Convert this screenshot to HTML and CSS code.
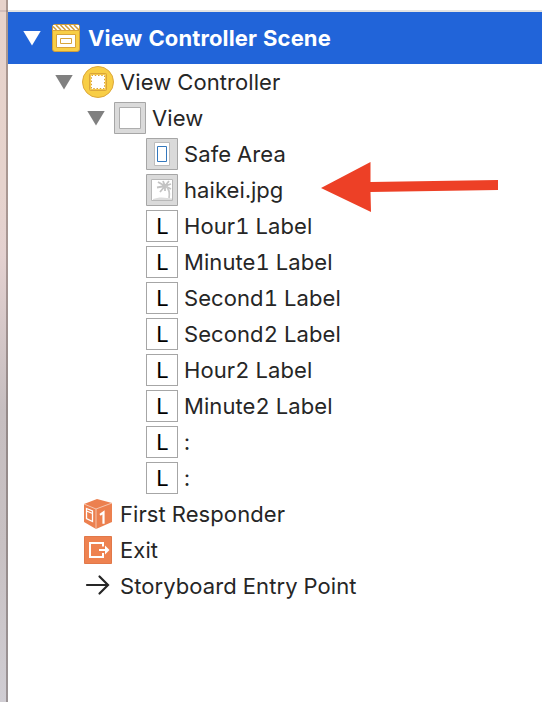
FILE: index.html
```html
<!DOCTYPE html>
<html lang="en">
<head>
<meta charset="utf-8">
<title>Document Outline</title>
<link rel="stylesheet" href="styles.css">
</head>
<body>
<div class="window">
  <div class="edge"></div>
  <main class="outline">
    <div class="topbar"></div>
    <div class="row header">
      <span class="caret"></span>
      <svg class="icon" viewBox="0 0 32 32"><rect x="2.5" y="2.5" width="27" height="27" rx="2.5" fill="#f8ce46" stroke="#cf9d3c"/><path d="M3 3h26v5H3z" fill="#fff"/><path d="M3 4.500l3.500 3.500M6 3l5 5M10.500 3l5 5M15 3l5 5M19.500 3l5 5M24 3l5 5" stroke="#cf9d3c" stroke-width="1.500"/><path d="M2 8.5h28" stroke="#d8a43b"/><path d="M6.5 12.5h19v13h-19z" fill="#fff" stroke="#d8a43b"/><path d="M10.5 16.5h11v5h-11z" fill="#fff" stroke="#d8a43b"/></svg>
      <span class="text">View Controller Scene</span>
    </div>
    <div class="row l1">
      <span class="caret"></span>
      <svg class="icon" viewBox="0 0 32 32"><circle cx="16" cy="16" r="15.5" fill="#f8ce46" stroke="#dda83c"/><rect x="7.5" y="7.5" width="17" height="17" rx="1" fill="#f5c84b" stroke="#dba63a"/><path d="M9 9h14v14H9z" fill="#fff"/><path d="M9.500 9.500h13v13h-13z" fill="none" stroke="#d8a43b" stroke-dasharray="1.5 1.75"/></svg>
      <span class="text">View Controller</span>
    </div>
    <div class="row l2">
      <span class="caret"></span>
      <svg class="icon" viewBox="0 0 32 32"><path d="M.5.5h31v31H.5z" fill="#dadada" stroke="#a6a6a6"/><path d="M5.5 5.5h21v21h-21z" fill="#fff" stroke="#aeaeae"/></svg>
      <span class="text">View</span>
    </div>
    <div class="row l3">
      <svg class="icon" viewBox="0 0 32 32"><path d="M.5.5h31v31H.5z" fill="#dadada" stroke="#a6a6a6"/><path d="M8.5 4.5h15v23h-15z" fill="#fff" stroke="#bcbcbc"/><path d="M11.5 8.5h9v15h-9z" fill="#fff" stroke="#3478bd"/></svg>
      <span class="text">Safe Area</span>
    </div>
    <div class="row l3">
      <svg class="icon" viewBox="0 0 32 32"><path d="M.5.5h31v31H.5z" fill="#dadada" stroke="#a6a6a6"/><path d="M5.5 5.5h21v21h-21z" fill="#fff" stroke="#b8b8b8"/><path d="M7 25c4-1.500 9-2 14-1l5 .5V26H7z" fill="#dcdcdc"/><path d="M19 12l-7-4M19 12l-2-5M19 12l4-5M19 12l6-2M19 12l-8 1.500M19 12l-5 6M19 12l6 3M19 12l0 5" stroke="#c3c3c3" stroke-width="1.800" fill="none"/><path d="M20 12c3 3 4 7 3 12" stroke="#c8c8c8" stroke-width="1.800" fill="none"/></svg>
      <span class="text">haikei.jpg</span>
    </div>
    <div class="row l3"><span class="icon label">L</span><span class="text">Hour1 Label</span></div>
    <div class="row l3"><span class="icon label">L</span><span class="text">Minute1 Label</span></div>
    <div class="row l3"><span class="icon label">L</span><span class="text">Second1 Label</span></div>
    <div class="row l3"><span class="icon label">L</span><span class="text">Second2 Label</span></div>
    <div class="row l3"><span class="icon label">L</span><span class="text">Hour2 Label</span></div>
    <div class="row l3"><span class="icon label">L</span><span class="text">Minute2 Label</span></div>
    <div class="row l3"><span class="icon label">L</span><span class="text">:</span></div>
    <div class="row l3"><span class="icon label">L</span><span class="text">:</span></div>
    <div class="row leaf">
      <svg class="icon" viewBox="0 0 32 32"><path d="M2 6l13-5 15 4v19l-16 7L2 24z" fill="#ec804f"/><path d="M2 6l12 5 16-6M14 11v20" fill="none" stroke="#f8d5c4" stroke-width=".8"/><path d="M4.500 10.500l6 2.500v10.500l-6-3zM4.500 13l6 2.500" fill="none" stroke="#fff" stroke-width="1.300"/><path d="M18 16.800l3.500-2.500v11.500" fill="none" stroke="#fff" stroke-width="2.200"/></svg>
      <span class="text">First Responder</span>
    </div>
    <div class="row leaf">
      <svg class="icon" viewBox="0 0 32 32"><path d="M2.500 2.500h27v27h-27z" fill="#ee8250" stroke="#e17849"/><path d="M21 12.500V9H8v14h13v-4M17 16h8" fill="none" stroke="#fff" stroke-width="2"/><path d="M23 11.500l4.500 4.500-4.500 4.500z" fill="#fff"/></svg>
      <span class="text">Exit</span>
    </div>
    <div class="row leaf">
      <svg class="icon" viewBox="0 0 32 32"><path d="M5 15h20.500M17.500 6.500l8.500 8.500-8.500 8.500" fill="none" stroke="#262626" stroke-width="2.200" stroke-linecap="round"/></svg>
      <span class="text">Storyboard Entry Point</span>
    </div>
  </main>
  <svg class="pointer" viewBox="0 0 178 52"><path d="M0 26L49.500 0v20L177 18v10L49.500 30 50 50z" fill="#ed4026"/></svg>
</div>
</body>
</html>
```
FILE: styles.css
```css
* { box-sizing: border-box; }
body { margin: 0; background: #fff; font-family: Inter, "Liberation Sans", sans-serif; color: #262626; }
.window { position: relative; display: flex; width: 542px; height: 702px; overflow: hidden; }
.edge {
  width: 8px;
  background:
    linear-gradient(90deg, transparent 6px, rgba(60, 45, 40, .36) 6px),
    linear-gradient(#0000 10px, #d2bebb 10px, #d2bebb 12px, #0000 12px),
    linear-gradient(#e7d3cb 0, #e6d3cd 190px, #e4d1d0 255px, #c6bec0 410px, #c8c1c3 550px, #d0cdd3 702px);
}
.outline { flex: 1; }
.topbar { height: 12px; border-bottom: 2px solid #e3e3e3; }
.row { display: flex; align-items: center; height: 36px; font-size: 22px; line-height: 36px; white-space: nowrap; letter-spacing: .08px; font-variant-numeric: tabular-nums; }
.header { height: 52px; padding-left: 15px; background: #2164d9; color: #fff; font-weight: 700; letter-spacing: .12px; }
.l1 { padding-left: 47px; }
.l2 { padding-left: 79px; }
.l3 { padding-left: 138px; }
.leaf { padding-left: 74px; }
.caret { width: 18px; height: 15px; margin-right: 9px; background: #808080; clip-path: polygon(0 0, 100% 0, 50% 100%); }
.header .caret { background: #fff; }
.icon { flex: none; width: 32px; height: 32px; margin-right: 6px; }
.label { border: 1px solid #a6a6a6; color: #000; text-align: center; line-height: 31px; padding-left: 1px; }
.pointer { position: absolute; left: 321px; top: 162px; width: 178px; height: 52px; }
```
